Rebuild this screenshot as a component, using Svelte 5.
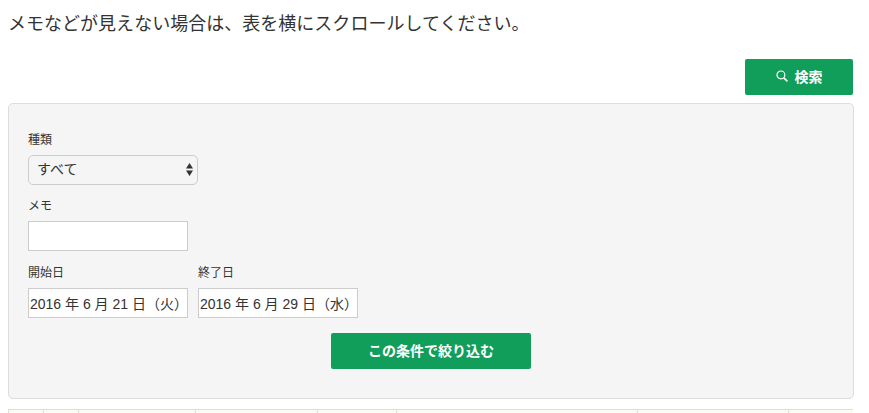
<script>
  const cols = [35, 35, 117, 122, 79, 241, 151];
</script>

<div class="page">
  <p class="note">メモなどが見えない場合は、表を横にスクロールしてください。</p>
  <div class="actions">
    <button class="btn search" type="button">
      <svg viewBox="0 0 12 12" width="12" height="12" aria-hidden="true">
        <circle cx="4.9" cy="4.9" r="3.9" fill="none" stroke="currentColor" stroke-width="1.2" />
        <path d="M7.8 7.8 11.4 11.4" fill="none" stroke="currentColor" stroke-width="1.7" />
      </svg>
      検索
    </button>
  </div>
  <form class="panel">
    <div class="field kind">
      <label for="kind">種類</label>
      <div class="select-wrap">
        <select id="kind"><option>すべて</option></select>
        <svg class="arrows" viewBox="0 0 7 13" width="7" height="13" aria-hidden="true">
          <path d="M3.5 0 7 5.6H0Z M0 7.6H7L3.5 13Z" fill="#333" />
        </svg>
      </div>
    </div>
    <div class="field memo">
      <label for="memo">メモ</label>
      <input id="memo" type="text" />
    </div>
    <div class="dates">
      <div class="field">
        <label for="start">開始日</label>
        <input id="start" type="text" value="2016 年 6 月 21 日（火）" />
      </div>
      <div class="field">
        <label for="end">終了日</label>
        <input id="end" type="text" value="2016 年 6 月 29 日（水）" />
      </div>
    </div>
    <div class="submit"><button class="btn apply" type="button">この条件で絞り込む</button></div>
  </form>
  <div class="table">
    {#each cols as w}
      <div class="cell" style="width: {w}px"></div>
    {/each}
  </div>
</div>

<style>
  :global(body) {
    margin: 0;
    background: #fff;
    overflow: hidden;
  }
  .page {
    width: 845px;
    height: 413px;
    padding: 0 16px 0 8px;
    font-family: "Liberation Sans", "Noto Sans CJK JP", sans-serif;
    color: #333;
    overflow: hidden;
  }
  .note {
    margin: 0;
    padding-top: 12px;
    font-size: 18px;
    line-height: 24px;
    height: 47px;
    letter-spacing: 0.02px;
  }
  .actions {
    display: flex;
    justify-content: flex-end;
    height: 44px;
  }
  .btn {
    display: flex;
    align-items: center;
    justify-content: center;
    gap: 7px;
    border: 0;
    border-radius: 2px;
    background: #119e5a;
    color: #fff;
    font: bold 14px "Liberation Sans", "Noto Sans CJK JP", sans-serif;
    padding: 0 0 2px;
    height: 36px;
  }
  .search { width: 108px; }
  .apply { width: 200px; }
  .panel {
    box-sizing: border-box;
    height: 296px;
    width: 846px;
    margin: 0;
    padding: 27px 19px 0;
    background: #f5f5f5;
    border: 1px solid #ddd;
    border-radius: 5px;
  }
  .field {
    display: flex;
    flex-direction: column;
    align-items: flex-start;
    margin-bottom: 15px;
  }
  .kind { margin-bottom: 12px; }
  .memo { margin-bottom: 13px; }
  label {
    font-size: 12px;
    line-height: 18px;
    height: 18px;
    margin-bottom: 6px;
  }
  .select-wrap {
    position: relative;
    width: 170px;
    height: 30px;
  }
  .arrows {
    position: absolute;
    top: 8px;
    right: 5px;
    pointer-events: none;
  }
  select {
    display: block;
    width: 170px;
    height: 30px;
    box-sizing: border-box;
    padding: 0 8px 2px;
    border: 1px solid #ccc;
    border-radius: 5px;
    font: 14px "Liberation Sans", "Noto Sans CJK JP", sans-serif;
    color: #333;
    appearance: none;
    background: #f5f5f5;
  }
  input {
    box-sizing: border-box;
    width: 160px;
    height: 30px;
    border: 1px solid #ccc;
    border-radius: 0;
    background: #fff;
    padding: 0 1px;
    font: 14px "Liberation Sans", "Noto Sans CJK JP", sans-serif;
    color: #333;
    outline: none;
  }
  .dates {
    display: flex;
    gap: 10px;
  }
  .submit {
    display: flex;
    justify-content: center;
  }
  .table {
    display: flex;
    margin-top: 10px;
    width: 844px;
    height: 10px;
    background: #fbfbf3;
    border-top: 1px solid #ddd;
    border-left: 1px solid #ddd;
  }
  .cell {
    box-sizing: border-box;
    border-right: 1px solid #ddd;
    height: 10px;
  }
</style>
